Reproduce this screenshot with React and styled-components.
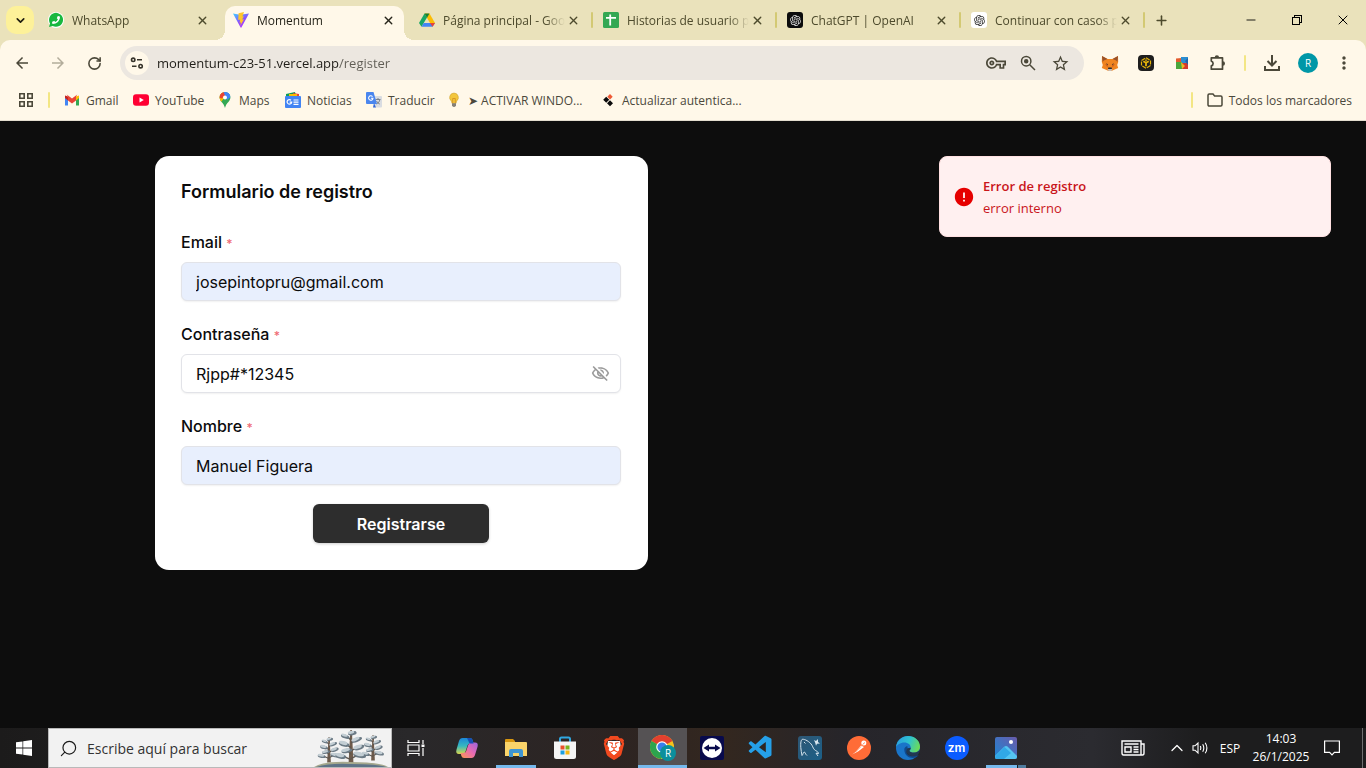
import React, { useState } from "react";
import styled, { createGlobalStyle, css } from "styled-components";
import { RotateCw, X, Plus, ChevronDown, ChevronUp, Minus, Search } from "lucide-react";
import { MdOutlineVpnKey, MdStarBorder, MdMoreVert, MdOutlineVisibilityOff, MdError, MdArrowBack, MdArrowForward } from "react-icons/md";
import { RiOpenaiFill } from "react-icons/ri";
import { SiBrave } from "react-icons/si";
import { VscVscode } from "react-icons/vsc";
import { FaPhoneAlt } from "react-icons/fa";

const uiFont = `"Open Sans", "Noto Sans", sans-serif`;
const formFont = `Inter, "Open Sans", sans-serif`;

const GlobalStyle = createGlobalStyle`
  *, *::before, *::after { box-sizing: border-box; }
  body { margin: 0; font-family: ${uiFont}; font-size: 12px; background: #0d0d0d; }
  button, input { font: inherit; color: inherit; }
  button { padding: 0; border: 0; background: none; cursor: pointer; }
  h1, h2, p { margin: 0; }
  svg { display: block; flex: none; }
`;

const Screen = styled.div`
  min-height: 100vh;
  display: flex;
  flex-direction: column;
`;

/* ---------- Browser: tab strip ---------- */

const Chrome = styled.header`
  background: #eae2bb;
`;

const TabStrip = styled.div`
  display: flex;
  align-items: center;
  height: 40px;
  padding-left: 6px;
  color: #4d4a2c;
`;

const TabSearch = styled.button`
  display: grid;
  place-items: center;
  flex: none;
  width: 28px;
  height: 28px;
  margin-right: 4px;
  border-radius: 10px;
  background: #fdf199;
  color: #1f1d10;
`;

const Tab = styled.div`
  display: flex;
  align-items: center;
  flex: 0 1 182px;
  min-width: 0;
  height: 28px;
  padding: 0 10px;
  ${(p) =>
    p.$active &&
    css`
      position: relative;
      flex-basis: 179px;
      height: 34px;
      margin: 6px 5px 0 5px;
      padding: 0 8px 6px;
      border-radius: 10px 10px 0 0;
      background: #fff8e9;
      color: #26241a;
      &::before,
      &::after {
        content: "";
        position: absolute;
        bottom: 0;
        width: 10px;
        height: 10px;
      }
      &::before {
        left: -10px;
        background: radial-gradient(circle at 0 0, transparent 10px, #fff8e9 10px);
      }
      &::after {
        right: -10px;
        background: radial-gradient(circle at 100% 0, transparent 10px, #fff8e9 10px);
      }
    `}
`;

const TabTitle = styled.span`
  flex: 1;
  min-width: 0;
  margin-left: 8px;
  overflow: hidden;
  white-space: nowrap;
  mask-image: linear-gradient(90deg, #000 calc(100% - 20px), transparent);
`;

const CloseTab = styled.button`
  display: grid;
  place-items: center;
  width: 16px;
  height: 16px;
`;

const Divider = styled.span`
  flex: none;
  width: 2px;
  height: 16px;
  border-radius: 1px;
  background: ${(p) => p.$color || "#f3e684"};
`;

const NewTab = styled.button`
  display: grid;
  place-items: center;
  width: 32px;
  height: 28px;
`;

const WindowControls = styled.div`
  display: flex;
  margin-left: auto;
  color: #000;
`;

const WindowButton = styled.button`
  display: grid;
  place-items: center;
  width: 46px;
  height: 40px;
`;

/* ---------- Browser: toolbar ---------- */

const Bars = styled.div`
  border-radius: 10px 10px 0 0;
  background: #fff8e9;
  border-bottom: 1px solid #e3ddcf;
`;

const Toolbar = styled.div`
  display: flex;
  align-items: center;
  height: 46px;
  padding: 0 4px;
  color: #4b4839;
`;

const ToolButton = styled.button`
  display: grid;
  place-items: center;
  flex: none;
  width: ${(p) => (p.$small ? 32 : 36)}px;
  height: 34px;
  color: ${(p) => (p.$faded ? "#b3ad9b" : "inherit")};
`;

const Omnibox = styled.form`
  display: flex;
  align-items: center;
  flex: 1;
  height: 34px;
  margin: 0 8px;
  padding: 0 8px 0 5px;
  border-radius: 17px;
  background: #ece7e0;
`;

const SiteInfo = styled.button`
  display: grid;
  place-items: center;
  width: 24px;
  height: 24px;
  border-radius: 50%;
  background: #fff8e9;
`;

const AddressInput = styled.input`
  flex: 1;
  min-width: 0;
  padding: 0;
  margin-left: 8px;
  border: 0;
  outline: 0;
  font-size: 13px;
  background: linear-gradient(90deg, #1f1d18 182px, #605d55 182px);
  -webkit-background-clip: text;
  background-clip: text;
  color: transparent;
`;

const ToolDivider = styled.span`
  display: grid;
  place-items: center;
  width: 18px;
`;

const Avatar = styled.span`
  display: grid;
  place-items: center;
  width: 20px;
  height: 20px;
  border-radius: 50%;
  background: #0097a7;
  color: #fff;
  font-size: 10px;
`;

/* ---------- Browser: bookmarks ---------- */

const Bookmarks = styled.nav`
  display: flex;
  align-items: center;
  height: 34px;
  padding: 0 14px 6px 18px;
  color: #4b483c;
`;

const BookmarkItems = styled.div`
  display: flex;
  margin-left: 14px;
`;

const Bookmark = styled.a`
  display: flex;
  align-items: center;
  gap: 6px;
  width: ${(p) => (p.$width ? `${p.$width}px` : "auto")};
  color: inherit;
  text-decoration: none;
  white-space: nowrap;
`;

const AppsButton = styled.button`
  margin-right: 14px;
`;

const AllBookmarks = styled.div`
  display: flex;
  align-items: center;
  gap: 14px;
  margin-left: auto;
`;

/* ---------- Registration page ---------- */

const Page = styled.main`
  display: flex;
  align-items: flex-start;
  justify-content: space-between;
  flex: 1;
  gap: 35px;
  padding: 35px 35px 35px 155px;
  background: #0d0d0d;
`;

const Card = styled.form`
  display: flex;
  flex-direction: column;
  flex: 0 1 493px;
  padding: 24px 27px 27px 26px;
  border-radius: 14px;
  background: #fff;
  color: #0b0b0c;
  font-family: ${formFont};
  font-size: 16px;
`;

const CardTitle = styled.h1`
  margin-bottom: 28px;
  font-size: 18px;
  line-height: 24px;
  font-weight: 600;
`;

const Field = styled.div`
  display: flex;
  flex-direction: column;
  gap: 10px;
  margin-bottom: ${(p) => (p.$last ? 19 : 23)}px;
`;

const Label = styled.label`
  line-height: 20px;
  font-weight: 500;
`;

const Required = styled.span`
  color: #ef6b75;
  font-size: 12px;
  line-height: 12px;
`;

const InputShell = styled.div`
  display: flex;
  align-items: center;
  height: 39px;
  padding: 0 10px 0 14px;
  border: 1px solid #e2e3e8;
  border-radius: 6px;
  background: ${(p) => (p.$filled ? "#e8effd" : "#fff")};
  box-shadow: 0 1px 2px rgba(0, 0, 0, 0.06);
`;

const TextInput = styled.input`
  flex: 1;
  min-width: 0;
  padding: 0;
  border: 0;
  outline: 0;
  background: transparent;
`;

const EyeButton = styled.button`
  color: #9b9b9b;
`;

const SubmitButton = styled.button`
  align-self: center;
  width: 176px;
  height: 39px;
  border-radius: 6px;
  background: #2d2d2d;
  color: #fff;
  font-weight: 600;
  box-shadow: 0 1px 3px rgba(0, 0, 0, 0.2);
`;

const Toast = styled.section`
  display: flex;
  align-items: center;
  flex: 0 1 392px;
  gap: 8px;
  min-height: 81px;
  padding: 16px 16px 16px 13px;
  border: 1px solid #ffe0e1;
  border-radius: 8px;
  background: #fff0f0;
  color: #c9151b;
  font-size: 13px;
  line-height: 22px;
`;

const ToastTitle = styled.h2`
  font-size: 13px;
  line-height: 22px;
  font-weight: 600;
`;

/* ---------- Taskbar ---------- */

const Taskbar = styled.footer`
  display: flex;
  height: 40px;
  background: linear-gradient(90deg, #1c1b1b 0, #29282a 30%, #2d2422 45%, #33271f 53%, #26252a 62%, #2b2b30 80%, #1d1d1e 88%);
  color: #fff;
`;

const TaskButton = styled.button`
  display: grid;
  place-items: center;
  position: relative;
  flex: none;
  width: ${(p) => p.$width || 49}px;
  background: ${(p) => (p.$active ? "#555254" : "transparent")};
  &::after {
    content: "";
    position: absolute;
    bottom: 0;
    height: 3px;
    width: ${(p) => (p.$active ? "100%" : "40px")};
    display: ${(p) => (p.$open || p.$active ? "block" : "none")};
    background: ${(p) =>
      p.$stacked ? "linear-gradient(90deg, #76b9ed 31px, #1f1f1f 31px 32px, #4f7c9f 32px)" : "#76b9ed"};
  }
`;

const TaskApps = styled.div`
  display: flex;
  margin-left: 2px;
`;

const SearchBox = styled.label`
  display: flex;
  align-items: center;
  flex: 0 1 344px;
  min-width: 0;
  padding: 0 3px 0 10px;
  border: 1px solid #b9b9b9;
  background: #f2f2f2;
  color: #1b1b1b;
`;

const SearchInput = styled.input`
  flex: 1;
  min-width: 0;
  margin-left: 9px;
  padding: 0;
  border: 0;
  outline: 0;
  background: transparent;
  font-size: 14px;
  &::placeholder {
    color: #333;
    opacity: 1;
  }
`;

const Tray = styled.div`
  display: flex;
  margin-left: auto;
  padding-right: 3px;
`;

const TrayButton = styled.button`
  display: grid;
  place-items: center;
  width: ${(p) => p.$width}px;
`;

const Clock = styled.time`
  display: flex;
  flex-direction: column;
  justify-content: center;
  width: 58px;
  text-align: center;
  line-height: 18px;
`;

const DesktopEdge = styled.span`
  width: 1px;
  background: #6f6f70;
`;

/* ---------- Drawings ---------- */

const WhatsAppIcon = () => (
  <svg width="16" height="16" viewBox="0 0 16 16">
    <circle cx="8" cy="8" r="8" fill="#fff" />
    <path d="M1 15l1-3.6A7 7 0 1 1 4.700 14z" fill="#19b83f" />
    <FaPhoneAlt x="4" y="4" size={8} color="#fff" transform="rotate(-90 8 8)" />
  </svg>
);

const ViteIcon = () => (
  <svg width="16" height="16" viewBox="0 0 16 16">
    <defs>
      <linearGradient id="vite" x1="0" y1="0" x2="0.7" y2="1">
        <stop offset="0" stopColor="#41d1ff" />
        <stop offset="0.6" stopColor="#8b4dfe" />
        <stop offset="1" stopColor="#bd34fe" />
      </linearGradient>
    </defs>
    <path d="M0 1.500l7 1.200L16 1.500 8.400 15.400q-.4.700-.8 0z" fill="url(#vite)" />
    <path d="M11 0L5.600 1.200 5.200 8l2-.4-.6 3.200 1.400-.4-.7 3.300 3.700-6.500-1.900.3 1.900-3.200-1.600.2z" fill="#ffc52a" />
  </svg>
);

const DriveIcon = () => (
  <svg width="16" height="16" viewBox="0 0 16 16">
    <path d="M5.500 1.500h5L16 11h-5z" fill="#fbbc04" />
    <path d="M5.500 1.500L0 11l2.500 3.800L8 5.500z" fill="#16a765" />
    <path d="M5.500 1.500h5L8 5.700z" fill="#188038" />
    <path d="M4.700 11H16l-2.500 3.800h-11z" fill="#4285f4" />
    <path d="M10.900 11H16l-2.400 3.800z" fill="#ea4335" />
  </svg>
);

const SheetsIcon = () => (
  <svg width="16" height="16" viewBox="0 0 16 16">
    <rect width="16" height="16" rx="1.500" fill="#34a853" />
    <path d="M3 5.800h10M7.200 2.500v11" stroke="#fff" strokeWidth="1.800" />
  </svg>
);

const OpenAiTile = styled.span`
  display: grid;
  place-items: center;
  flex: none;
  width: 16px;
  height: 16px;
  border-radius: 3px;
  background: ${(p) => (p.$dark ? "#0c0c0c" : "#fff")};
  color: ${(p) => (p.$dark ? "#e6e6e6" : "#2b2b2b")};
`;

const SiteInfoIcon = () => (
  <svg width="14" height="14" viewBox="0 0 14 14" fill="none" stroke="#37342b" strokeWidth="1.600">
    <circle cx="3.200" cy="3.800" r="1.700" />
    <path d="M7 3.800h5M2 10.200h4.500" />
    <circle cx="10.600" cy="10.200" r="1.700" />
  </svg>
);

const ZoomIcon = () => (
  <svg width="16" height="16" viewBox="0 0 16 16" fill="none" stroke="currentColor" strokeWidth="1.500">
    <circle cx="6.200" cy="6.200" r="4.700" />
    <path d="M9.700 9.700L15 15" />
    <circle cx="6.200" cy="6.200" r="1.500" fill="currentColor" />
  </svg>
);

const PuzzleIcon = () => (
  <svg width="18" height="18" viewBox="0 0 18 18">
    <path
      d="M2.300 3.800h11.200v11.400H2.300v-3.300a2.500 2.500 0 0 0 0-4.800z"
      fill="none"
      stroke="currentColor"
      strokeWidth="1.700"
      strokeLinejoin="round"
    />
    <path d="M5.700 3.500a2.200 2.200 0 0 1 4.400 0zM13.800 7.300a2.200 2.200 0 0 1 0 4.400z" fill="currentColor" />
  </svg>
);

const FoxIcon = () => (
  <svg width="18" height="16" viewBox="0 0 18 16">
    <path d="M1 1l5.500 3h5L17 1l.2 6-1 3 1 3-4.700 2-2 1h-3l-2-1-4.700-2 1-3-1-3z" fill="#f0841f" />
    <path d="M1 1l5.500 3-3.700 1.500L1.600 7zM17 1l-5.500 3 3.700 1.500L16.400 7z" fill="#97512a" />
    <path d="M4 9l3 1-.5 2.500zM14 9l-3 1 .5 2.500z" fill="#d2601a" />
    <path d="M5 8.300l2 1-.8.800zM13 8.300l-2 1 .8.800zM7.300 12.500h3.400l.3 2H7z" fill="#262a30" />
    <path d="M6.500 14l1 2h3l1-2z" fill="#c9bdb4" />
  </svg>
);

const BnbTile = styled.span`
  display: grid;
  place-items: center;
  width: 16px;
  height: 16px;
  border-radius: 4px;
  background: #1e1e1e;
  color: #e5b30a;
`;

const BnbIcon = () => (
  <BnbTile>
    <svg width="12" height="12" viewBox="0 0 12 12" fill="none" stroke="currentColor" strokeWidth="1.200">
      <path d="M6 .8l4.500 2.600v5.200L6 11.200 1.500 8.600V3.400z" strokeDasharray="4.200 1" />
      <path d="M3.300 4.300L6 5.800l2.700-1.500M6 5.800v3.500M6 2.600v1.200" strokeWidth="1.800" />
    </svg>
  </BnbTile>
);

const ColorBoxIcon = () => (
  <svg width="12" height="12" viewBox="0 0 12 12">
    <path d="M0 1.500L6 1v5H0z" fill="#e35a2c" />
    <path d="M5 0h7v6H5z" fill="#2c8ed0" />
    <path d="M0 5h6v7H0z" fill="#4aa63c" />
    <path d="M6 6h6v6H6z" fill="#d3382f" />
    <path d="M5 5l4 4-3 3z" fill="#f0b824" />
    <path d="M9 4l3 4V1z" fill="#215fa8" />
  </svg>
);

const AppsIcon = () => (
  <svg width="16" height="16" viewBox="0 0 16 16" fill="none" stroke="#4b4839" strokeWidth="1.600">
    <path d="M1.800 1.800h4.400v4.400H1.800zM9.800 1.800h4.400v4.400H9.800zM1.800 9.800h4.400v4.400H1.800zM9.800 9.800h4.400v4.400H9.800z" />
  </svg>
);

const GmailIcon = () => (
  <svg width="16" height="16" viewBox="0 0 16 16">
    <path d="M1 4v9.500h3V7z" fill="#4285f4" />
    <path d="M15 4v9.500h-3V7z" fill="#34a853" />
    <path d="M1 3.500L4 4.600v4L1 6z" fill="#c5221f" />
    <path d="M15 3.500l-3 1.100v4L15 6z" fill="#fbbc04" />
    <path d="M4 8.600V4.700L2.700 2.600 8 6.600l5.300-4L12 4.700v3.900l-4 3z" fill="#ea4335" />
  </svg>
);

const YouTubeIcon = () => (
  <svg width="16" height="16" viewBox="0 0 16 16">
    <rect y="2.200" width="16" height="11.600" rx="3" fill="#ff0033" />
    <path d="M6.500 5.500v5L10.800 8z" fill="#fff" />
  </svg>
);

const MapsIcon = () => (
  <svg width="16" height="16" viewBox="0 0 16 16">
    <defs>
      <clipPath id="pin">
        <path d="M8 0a5.400 5.400 0 0 1 5.400 5.500C13.400 9.500 9.300 10.500 8 16 6.700 10.500 2.600 9.500 2.600 5.500A5.400 5.400 0 0 1 8 0z" />
      </clipPath>
    </defs>
    <g clipPath="url(#pin)">
      <path d="M0 0h16v16H0z" fill="#34a853" />
      <path d="M6 0h10L8 7z" fill="#4285f4" />
      <path d="M0 0h7l1 5-4 5-4-4z" fill="#fbbc04" />
      <path d="M2 0h4.500L9 2.500 4.800 6.500 1 5z" fill="#ea4335" />
      <path d="M6.500 0H16v3L10 8z" fill="#4285f4" />
    </g>
    <circle cx="8" cy="5.500" r="2" fill="#fff" />
  </svg>
);

const NewsIcon = () => (
  <svg width="16" height="16" viewBox="0 0 16 16">
    <path d="M1 2l9-2 1 4H1z" fill="#0c9d58" />
    <path d="M8 1l6 1v4H8z" fill="#ea4335" />
    <path d="M4 2h8v3H4z" fill="#fbbc04" />
    <rect y="4" width="16" height="12" rx="1" fill="#4284f3" />
    <path d="M6 8.200a2.300 2.300 0 1 0 .7 1.900H4.700" fill="none" stroke="#fff" strokeWidth="1.200" />
    <path d="M8.500 8h5M8.500 10.200h5M8.500 12.400h5" stroke="#fff" strokeWidth="1.200" />
  </svg>
);

const TranslateIcon = () => (
  <svg width="16" height="16" viewBox="0 0 16 16">
    <path d="M6 4h9q1 0 1 1v9.500q0 1-1 1H9z" fill="#d9dce1" />
    <path d="M8 11l2 4.500H7z" fill="#3367d6" />
    <path d="M9.500 7.500h5M12 6v1.500M10.500 12c2-1 3-2.500 3.300-4.300M10.500 9c.7 1.500 2 2.500 3.300 3" stroke="#727a87" fill="none" strokeWidth=".9" />
    <path d="M1 0h6.500L11 12H1q-1 0-1-1V1q0-1 1-1z" fill="#4a86ee" />
    <path d="M6.500 4.600a2.200 2.200 0 1 0 .5 1.700H4.900" fill="none" stroke="#fff" strokeWidth="1.100" />
  </svg>
);

const BulbIcon = () => (
  <svg width="16" height="16" viewBox="0 0 16 16">
    <path d="M8 1a4.500 4.500 0 0 1 2.700 8l-.7 2.500H6L5.300 9A4.500 4.500 0 0 1 8 1z" fill="#f3c63c" stroke="#c79a2d" strokeWidth=".5" />
    <path d="M6.700 11V6.500h2.600V11" fill="none" stroke="#d28d20" strokeWidth=".8" />
    <path d="M6 11.300h4v2.500q-2 2.400-4 0z" fill="#858078" />
  </svg>
);

const DiamondsIcon = () => (
  <svg width="16" height="16" viewBox="0 0 16 16">
    <path d="M10 2l2.700 2.700L10 7.400 7.300 4.700z" fill="#ee5a36" />
    <path d="M6.200 4.700l3 3-3 3-3-3zM10 8.300l3 3-3 3-3-3z" fill="#0b0b0b" />
  </svg>
);

const FolderIcon = () => (
  <svg width="16" height="14" viewBox="0 0 16 14" fill="none" stroke="#4b4839" strokeWidth="1.500">
    <path d="M1 2.200q0-1.200 1.200-1.200H6l1.600 2h6.200Q15 3 15 4.200v7.600q0 1.200-1.200 1.200H2.200Q1 13 1 11.800z" />
  </svg>
);

const RestoreIcon = () => (
  <svg width="12" height="12" viewBox="0 0 12 12" fill="none" stroke="currentColor" shapeRendering="crispEdges">
    <path d="M1.500 3.500h7v7h-7zM3.500 3V1.500h7v7H9" />
  </svg>
);

const WindowsIcon = () => (
  <svg width="16" height="16" viewBox="0 0 16 16" fill="#fff">
    <path d="M0 2.300l6.500-.9v6.200H0zM7.200 1.300L16 0v7.600H7.200zM0 8.400h6.500v6.200L0 13.700zM7.200 8.400H16V16l-8.800-1.300z" />
  </svg>
);

const branches = [
  [1, 2, 4, 1.8, -10],
  [-5, 5, 4, 1.7, 18],
  [5, 8, 5, 2, -22],
  [-6, 12, 5, 2.2, 14],
  [7, 15, 5, 2.2, -18],
  [-4, 18, 5, 2, -12],
  [-9, 23, 5, 2.2, 10],
  [8, 22, 6, 2.4, 12],
];

const Tree = ({ x, top, scale }) => (
  <g transform={`translate(${x} ${top}) scale(${scale})`}>
    <path d="M-.6 0H.800l1.500 32h-4.600z" fill="#6f5b4b" />
    {branches.map(([cx, cy]) => (
      <path key={`s${cy}`} d={`M0 ${cy + 4}L${cx} ${cy}`} stroke="#5d554d" strokeWidth="1.300" />
    ))}
    {branches.map(([cx, cy, rx, ry, turn]) => (
      <g key={`b${cy}`} transform={`rotate(${turn} ${cx} ${cy})`}>
        <ellipse cx={cx} cy={cy + 1} rx={rx} ry={ry} fill="#6b7a85" />
        <ellipse cx={cx - 1} cy={cy} rx={rx - 1} ry={ry - 0.5} fill="#c3ced4" />
      </g>
    ))}
  </g>
);

const TreesIcon = () => (
  <svg width="74" height="38" viewBox="0 0 74 38">
    <Tree x={15} top={8} scale={0.8} />
    <Tree x={59} top={6} scale={0.8} />
    <Tree x={37} top={1} scale={1.1} />
    <path d="M0 38q10-6 36-5 30 0 38 5z" fill="#a5a88d" />
    <path d="M2 38q14-4 34-3 28 0 36 3z" fill="#5d7387" />
  </svg>
);

const TaskViewIcon = () => (
  <svg width="18" height="16" viewBox="0 0 18 16" fill="none" stroke="#fff" strokeWidth="1.200">
    <path d="M1 0v2.500h11V0M1 16v-2.500h11V16M1 5h11v6H1zM16 0v4M16 8v8" />
    <path d="M14.500 4.500h3v2.500h-3z" fill="#fff" stroke="none" />
  </svg>
);

const CopilotIcon = () => (
  <svg width="24" height="24" viewBox="0 0 24 24">
    <defs>
      <linearGradient id="copA" x1="0" y1="0" x2="0" y2="1">
        <stop offset="0" stopColor="#1b86d8" />
        <stop offset="0.5" stopColor="#35b8c0" />
        <stop offset="1" stopColor="#d9d64c" />
      </linearGradient>
      <linearGradient id="copB" x1="1" y1="0" x2="0" y2="1">
        <stop offset="0" stopColor="#9a63e0" />
        <stop offset="0.5" stopColor="#ea6bb0" />
        <stop offset="1" stopColor="#ff9a50" />
      </linearGradient>
    </defs>
    <path d="M7.500 2h7.500q2 0 2.600 2l1 3.500h-3.500q-2 0-2.600 2l-2 6q-.7 2.500-3 2.500H4q-3.500 0-2.600-4L4 5q1-3 3.500-3z" fill="url(#copA)" />
    <path d="M16.500 22H9q-2 0-2.600-2L5.600 17h3q2 0 2.600-2l2-6q.7-2.500 3-2.500H20q3.500 0 2.600 4L20 19q-1 3-3.500 3z" fill="url(#copB)" />
    <path d="M12 2h3q2 0 2.600 2l1 3.500h-4z" fill="#174fb5" />
  </svg>
);

const ExplorerIcon = () => (
  <svg width="22" height="20" viewBox="0 0 22 20">
    <path d="M0 2q0-1 1-1h7l2 2v4H0z" fill="#d8960f" />
    <path d="M0 4h21q1 0 1 1v13H0z" fill="#fad46a" />
    <path d="M4 19v-6q0-2 2-2h10q2 0 2 2v6h-4v-4H8v4z" fill="#3f95d3" />
  </svg>
);

const StoreIcon = () => (
  <svg width="24" height="24" viewBox="0 0 24 24">
    <path d="M7 6V3q0-1.500 1.500-1.500h7Q17 1.500 17 3v3" fill="none" stroke="#30a7e0" strokeWidth="2" />
    <path d="M1 5.500h22v15q0 2.500-2.500 2.500h-17Q1 23 1 20.500z" fill="#f5f5f5" />
    <path d="M7.500 9.500h4v4h-4z" fill="#e8502a" />
    <path d="M12.500 9.500h4v4h-4z" fill="#7bb51d" />
    <path d="M7.500 14.500h4v4h-4z" fill="#1d9fe0" />
    <path d="M12.500 14.500h4v4h-4z" fill="#f7b713" />
  </svg>
);

const BraveIcon = () => (
  <svg width="24" height="24" viewBox="0 0 24 24">
    <path d="M6 5h12l1 7-2.500 6-4.500 3-4.500-3L5 12z" fill="#fff" />
    <SiBrave size={24} color="#f1491f" />
  </svg>
);

const ChromeIcon = () => (
  <svg width="26" height="26" viewBox="0 0 26 26">
    <circle cx="12" cy="12" r="12" fill="#f6c21c" />
    <path d="M12 12L1.600 6A12 12 0 0 1 22.400 6z" fill="#e2402f" />
    <path d="M1.600 6A12 12 0 0 0 11 24l5.500-9.500L12 12z" fill="#2da44e" />
    <circle cx="12" cy="12" r="5.800" fill="#fff" />
    <circle cx="12" cy="12" r="4.600" fill="#3b7ded" />
    <circle cx="18" cy="18" r="8" fill="#0b8f9c" />
    <text x="18" y="22" fontSize="10" fill="#fff" textAnchor="middle" fontFamily="Open Sans, sans-serif">R</text>
  </svg>
);

const TeamViewerIcon = () => (
  <svg width="24" height="24" viewBox="0 0 24 24">
    <rect width="24" height="24" rx="2" fill="#080a4c" />
    <circle cx="12" cy="12" r="10" fill="#fff" />
    <path d="M3.500 12L9 8.500v2.200h6V8.500l5.500 3.500-5.500 3.500v-2.200H9v2.200z" fill="#080a4c" />
  </svg>
);

const MysqlIcon = () => (
  <svg width="24" height="24" viewBox="0 0 24 24">
    <defs>
      <linearGradient id="mysql" x1="0" y1="0" x2="1" y2="1">
        <stop offset="0" stopColor="#2e5673" />
        <stop offset="1" stopColor="#1c6088" />
      </linearGradient>
    </defs>
    <rect width="24" height="24" rx="3" fill="url(#mysql)" />
    <path d="M4 19.500c-.5-3-1-5-1.200-8C2.500 7 3 3.500 4.500 3.300c2-.3 7 2 9.500 6 1 2 1.500 4 3.500 5.200 2 1 3 2 3 3l-2.500-.3 2 2.800M4 19.500c1-1 1.300-3 2-3.500 1.500 0 1 2 3 3.500M6 6l1.500 1.500" fill="none" stroke="#d7e5ee" strokeWidth="1" />
    <path d="M16 4l2 1 2-2v3l2 1.500-3 .2-1 2-.8-3z" fill="#d7e5ee" />
  </svg>
);

const PostmanIcon = () => (
  <svg width="24" height="24" viewBox="0 0 24 24">
    <circle cx="12" cy="12" r="12" fill="#ff6c37" />
    <path d="M5 18.500l3-2 6-7 3 1.500-6 4.500-3 1.500z" fill="#fff" />
    <circle cx="16.800" cy="7" r="2.500" fill="#fff" />
    <path d="M15.500 8.500l2.500-2" stroke="#ff6c37" strokeWidth=".8" />
    <path d="M8.500 16l5.500-5.500" stroke="#ff6c37" strokeWidth=".7" />
  </svg>
);

const EdgeIcon = () => (
  <svg width="24" height="24" viewBox="0 0 24 24">
    <defs>
      <linearGradient id="edgeTop" x1="0" y1="0.3" x2="1" y2="0.6">
        <stop offset="0" stopColor="#2a9fe0" />
        <stop offset="0.5" stopColor="#2fc3cf" />
        <stop offset="1" stopColor="#6ddc55" />
      </linearGradient>
    </defs>
    <circle cx="12" cy="12" r="12" fill="#1a75c9" />
    <path d="M0 11C1 4 6 0 12 0c7 0 12 5 12 10.500 0 4-3 6-6 6-2.500 0-4.500-.8-4.500-1.800 0-.7 1.300-1.200 1.300-3C14.800 9 12 6.500 8.500 6.500 4 6.500 1 9 0 11z" fill="url(#edgeTop)" />
    <path d="M8.300 13.500c0 5 4 8.500 8.500 8.500 3 0 5-1.500 6-3-3 1.500-8 1.500-10.500-.5-2-1.600-2.300-4.500-1-6.500 1-1 .2-2-1-1.500-1.200.6-2 1.500-2 3z" fill="#0f4a8e" />
    <path d="M14.800 11.800c0 1.800-1.300 2.300-1.300 3 0 1 2 1.800 4.500 1.800 3 0 5.300-1.500 5.800-3.600V18l-1.500 1.200c-3 1.500-8 1.500-10.500-.5-2-1.600-2-5-.5-6.500z" fill="#242429" opacity=".75" />
  </svg>
);

const ZoomAppBadge = styled.span`
  display: grid;
  place-items: center;
  width: 24px;
  height: 24px;
  border-radius: 50%;
  background: #0b5cff;
  color: #fff;
  font: 600 12px/20px ${formFont};
`;

const PhotosIcon = () => (
  <svg width="22" height="22" viewBox="0 0 22 22">
    <defs>
      <linearGradient id="photos" x1="0" y1="1" x2="1" y2="0">
        <stop offset="0" stopColor="#1c86d4" />
        <stop offset="1" stopColor="#6a5bab" />
      </linearGradient>
      <clipPath id="photoFrame"><rect width="22" height="22" rx="2" /></clipPath>
    </defs>
    <g clipPath="url(#photoFrame)">
      <path d="M0 0h22v22H0z" fill="url(#photos)" />
      <path d="M0 22v-3l9.500-9.500q1.500-1.200 3 0L22 19v3z" fill="#55c5f2" />
      <path d="M0 22v-2.500L9.500 10 16 16 9 22z" fill="#31a8e6" />
    </g>
    <circle cx="16" cy="5" r="2" fill="#fff" />
  </svg>
);

const NewspaperIcon = () => (
  <svg width="24" height="16" viewBox="0 0 24 16" fill="none" stroke="#fff" strokeWidth="1.400">
    <path d="M1 1h19v14H2.500Q1 15 1 13zM20 4h3v9q0 2-1.500 2H19M3.500 4h14M12.500 7h5M12.500 9.500h5M12.500 12h5M4 7h6v5H4z" />
  </svg>
);

const SpeakerIcon = () => (
  <svg width="17" height="14" viewBox="0 0 17 14" fill="none" stroke="#fff" strokeWidth="1.100">
    <path d="M1 4.800h2L6 2v10L3 9.200H1zM8.300 5q1 2 0 4M10.700 3.300q2.200 3.700 0 7.400M13.200 1.700q3.400 5.300 0 10.600" />
  </svg>
);

const NoticeIcon = () => (
  <svg width="16" height="16" viewBox="0 0 16 16" fill="none" stroke="#fff" strokeWidth="1.200">
    <path d="M.6 1h14.800v11.400h-5L8 14.800l-2.400-2.400h-5z" />
  </svg>
);

/* ---------- Composition ---------- */

const tabs = [
  { title: "WhatsApp", icon: <WhatsAppIcon /> },
  { title: "Momentum", icon: <ViteIcon />, active: true },
  { title: "Página principal - Goo", icon: <DriveIcon />, divider: true },
  { title: "Historias de usuario p", icon: <SheetsIcon />, divider: true },
  { title: "ChatGPT | OpenAI", icon: <OpenAiTile $dark><RiOpenaiFill size={13} /></OpenAiTile>, divider: true },
  { title: "Continuar con casos p", icon: <OpenAiTile><RiOpenaiFill size={13} /></OpenAiTile>, divider: true },
];

const bookmarks = [
  { label: "Gmail", icon: <GmailIcon />, width: 69 },
  { label: "YouTube", icon: <YouTubeIcon />, width: 84 },
  { label: "Maps", icon: <MapsIcon />, width: 68 },
  { label: "Noticias", icon: <NewsIcon />, width: 81 },
  { label: "Traducir", icon: <TranslateIcon />, width: 80 },
  { label: "➤ ACTIVAR WINDO...", icon: <BulbIcon />, width: 154 },
  { label: "Actualizar autentica...", icon: <DiamondsIcon /> },
];

const apps = [
  { name: "Copilot", icon: <CopilotIcon /> },
  { name: "Explorador de archivos", icon: <ExplorerIcon />, open: true },
  { name: "Microsoft Store", icon: <StoreIcon /> },
  { name: "Brave", icon: <BraveIcon /> },
  { name: "Google Chrome", icon: <ChromeIcon />, active: true },
  { name: "TeamViewer", icon: <TeamViewerIcon /> },
  { name: "Visual Studio Code", icon: <VscVscode size={28} color="#25a0e8" /> },
  { name: "MySQL Workbench", icon: <MysqlIcon /> },
  { name: "Postman", icon: <PostmanIcon /> },
  { name: "Microsoft Edge", icon: <EdgeIcon /> },
  { name: "Zoom", icon: <ZoomAppBadge>zm</ZoomAppBadge> },
  { name: "Fotos", icon: <PhotosIcon />, open: true, stacked: true },
];

function BrowserChrome() {
  return (
    <Chrome>
      <TabStrip>
        <TabSearch aria-label="Buscar pestañas"><ChevronDown size={13} strokeWidth={3} /></TabSearch>
        {tabs.map((t) => (
          <React.Fragment key={t.title}>
            <Tab $active={t.active}>
              {t.icon}
              <TabTitle>{t.title}</TabTitle>
              <CloseTab aria-label={`Cerrar ${t.title}`}><X size={13} strokeWidth={2.5} /></CloseTab>
            </Tab>
            {t.divider && <Divider $color="#d3c973" />}
          </React.Fragment>
        ))}
        <NewTab aria-label="Nueva pestaña"><Plus size={15} strokeWidth={2.5} /></NewTab>
        <WindowControls>
          <WindowButton aria-label="Minimizar"><Minus size={14} strokeWidth={1.5} /></WindowButton>
          <WindowButton aria-label="Restaurar"><RestoreIcon /></WindowButton>
          <WindowButton aria-label="Cerrar"><X size={16} strokeWidth={1.5} /></WindowButton>
        </WindowControls>
      </TabStrip>
      <Bars>
        <Toolbar>
          <ToolButton aria-label="Atrás"><MdArrowBack size={18} /></ToolButton>
          <ToolButton aria-label="Adelante" $faded><MdArrowForward size={18} /></ToolButton>
          <ToolButton aria-label="Recargar"><RotateCw size={15} strokeWidth={2.5} /></ToolButton>
          <Omnibox onSubmit={(e) => e.preventDefault()}>
            <SiteInfo type="button" aria-label="Información del sitio"><SiteInfoIcon /></SiteInfo>
            <AddressInput aria-label="Dirección" defaultValue="momentum-c23-51.vercel.app/register" />
            <ToolButton type="button" $small aria-label="Contraseñas"><MdOutlineVpnKey size={20} /></ToolButton>
            <ToolButton type="button" $small aria-label="Zoom"><ZoomIcon /></ToolButton>
            <ToolButton type="button" $small aria-label="Añadir a marcadores"><MdStarBorder size={19} /></ToolButton>
          </Omnibox>
          <ToolButton aria-label="MetaMask"><FoxIcon /></ToolButton>
          <ToolButton aria-label="Binance Wallet"><BnbIcon /></ToolButton>
          <ToolButton aria-label="Extensión"><ColorBoxIcon /></ToolButton>
          <ToolButton aria-label="Extensiones"><PuzzleIcon /></ToolButton>
          <ToolDivider><Divider /></ToolDivider>
          <ToolButton aria-label="Descargas">
            <svg width="18" height="18" viewBox="0 0 18 18" fill="none" stroke="currentColor" strokeWidth="2">
              <path d="M9 1v10M4.500 7L9 11.500 13.500 7M2 12v4h14v-4" />
            </svg>
          </ToolButton>
          <ToolButton aria-label="Perfil"><Avatar>R</Avatar></ToolButton>
          <ToolButton aria-label="Menú"><MdMoreVert size={20} /></ToolButton>
        </Toolbar>
        <Bookmarks>
          <AppsButton aria-label="Aplicaciones"><AppsIcon /></AppsButton>
          <Divider />
          <BookmarkItems>
            {bookmarks.map((b) => (
              <Bookmark key={b.label} href="#" $width={b.width}>{b.icon}{b.label}</Bookmark>
            ))}
          </BookmarkItems>
          <AllBookmarks>
            <Divider />
            <Bookmark href="#"><FolderIcon />Todos los marcadores</Bookmark>
          </AllBookmarks>
        </Bookmarks>
      </Bars>
    </Chrome>
  );
}

function FormField({ id, label, type = "text", value, filled, last, children }) {
  return (
    <Field $last={last}>
      <Label htmlFor={id}>{label} <Required>*</Required></Label>
      <InputShell $filled={filled}>
        <TextInput id={id} type={type} defaultValue={value} required />
        {children}
      </InputShell>
    </Field>
  );
}

export default function App() {
  const [visible, setVisible] = useState(true);
  return (
    <>
      <GlobalStyle />
      <Screen>
        <BrowserChrome />
        <Page>
          <Card onSubmit={(e) => e.preventDefault()}>
            <CardTitle>Formulario de registro</CardTitle>
            <FormField id="email" type="email" label="Email" value="josepintopru@gmail.com" filled />
            <FormField id="password" type={visible ? "text" : "password"} label="Contraseña" value="Rjpp#*12345">
              <EyeButton type="button" aria-label="Ocultar contraseña" onClick={() => setVisible(!visible)}>
                <MdOutlineVisibilityOff size={19} />
              </EyeButton>
            </FormField>
            <FormField id="name" label="Nombre" value="Manuel Figuera" filled last />
            <SubmitButton type="submit">Registrarse</SubmitButton>
          </Card>
          <Toast role="alert">
            <MdError size={22} color="#e60000" />
            <div>
              <ToastTitle>Error de registro</ToastTitle>
              <p>error interno</p>
            </div>
          </Toast>
        </Page>
        <Taskbar>
          <TaskButton $width={48} aria-label="Inicio"><WindowsIcon /></TaskButton>
          <SearchBox>
            <Search size={19} strokeWidth={1.5} transform="scale(-1 1)" />
            <SearchInput placeholder="Escribe aquí para buscar" aria-label="Buscar" />
            <TreesIcon />
          </SearchBox>
          <TaskButton $width={48} aria-label="Vista de tareas"><TaskViewIcon /></TaskButton>
          <TaskApps>
            {apps.map((a) => (
              <TaskButton key={a.name} aria-label={a.name} $open={a.open} $active={a.active} $stacked={a.stacked}>
                {a.icon}
              </TaskButton>
            ))}
          </TaskApps>
          <Tray>
            <TrayButton $width={58} aria-label="Noticias"><NewspaperIcon /></TrayButton>
            <TrayButton $width={30} aria-label="Iconos ocultos"><ChevronUp size={20} strokeWidth={1.5} /></TrayButton>
            <TrayButton $width={16} aria-label="Volumen"><SpeakerIcon /></TrayButton>
            <TrayButton $width={44} aria-label="Idioma">ESP</TrayButton>
            <Clock><span>14:03</span><span>26/1/2025</span></Clock>
            <TrayButton $width={44} aria-label="Notificaciones"><NoticeIcon /></TrayButton>
            <TrayButton $width={8} aria-label="Mostrar escritorio" />
            <DesktopEdge />
          </Tray>
        </Taskbar>
      </Screen>
    </>
  );
}
